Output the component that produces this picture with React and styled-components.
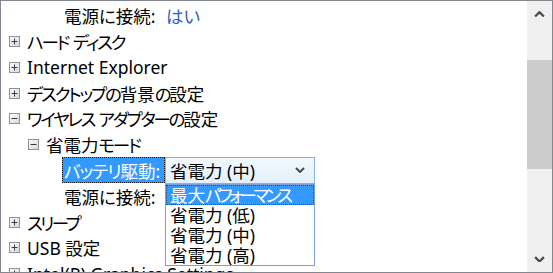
import React from 'react';
import styled, { createGlobalStyle } from 'styled-components';

const GlobalStyle = createGlobalStyle`
    html, body {
        margin: 0;
        padding: 0;
        background: #ffffff;
    }
    body {
        font-family: "Noto Sans", "Noto Sans CJK JP", sans-serif;
        font-feature-settings: "palt";
    }
`;

const Frame = styled.div`
    box-sizing: border-box;
    width: 553px;
    height: 273px;
    border: 1px solid #828790;
    display: flex;
    overflow: hidden;
    background: #ffffff;
`;

const Tree = styled.div`
    flex: 1;
    padding-top: 2px;
    overflow: hidden;
    position: relative;
`;

const Row = styled.div`
    height: 25.78px;
    display: flex;
    align-items: center;
    padding-left: ${p => p.$indent}px;
    font-size: 17.5px;
    color: #000000;
    white-space: nowrap;
`;

const Text = styled.span`
    white-space: pre;
`;

// kana in the original UI font are much narrower than the kanji
const Kana = styled.span`
    letter-spacing: -${p => p.$squeeze || 2.2}px;
`;

const Toggle = styled.svg`
    width: 11px;
    height: 11px;
    flex-shrink: 0;
    margin-right: 7px;
`;

const Label = styled.span`
    box-sizing: border-box;
    width: 103px;
    height: 26px;
    display: flex;
    align-items: center;
    padding: 0 2px;
    flex-shrink: 0;
    background: ${p => (p.$selected ? '#3399ff' : 'transparent')};
    color: ${p => (p.$selected ? '#ffffff' : '#000000')};
    outline: ${p => (p.$selected ? '1px dotted #1a1a1a' : 'none')};
    outline-offset: -1px;
`;

const Value = styled.span`
    color: #2a62c0;
    padding-left: 1px;
`;

const Combo = styled.div`
    position: relative;
    box-sizing: border-box;
    width: 150px;
    height: 27px;
    border: 1px solid #7eb4ea;
    background: linear-gradient(#f1f8fe, #e2f0fc);
    display: flex;
    align-items: center;
    justify-content: space-between;
    padding: 0 9px 0 4px;
`;

const ListBox = styled.div`
    position: absolute;
    left: -1px;
    top: 26px;
    width: 150px;
    box-sizing: border-box;
    border: 1px solid #7d9fd6;
    background: #ffffff;
    z-index: 2;
`;

const Option = styled.div`
    box-sizing: border-box;
    height: 20px;
    display: flex;
    align-items: center;
    padding-left: 4px;
    font-size: 17.5px;
    background: ${p => (p.$active ? '#3399ff' : '#ffffff')};
    color: ${p => (p.$active ? '#ffffff' : '#000000')};
    outline: ${p => (p.$active ? '1px dotted #2a4f7e' : 'none')};
    outline-offset: -1px;
`;

const Scrollbar = styled.div`
    width: 25px;
    background: #f0f0f0;
    display: flex;
    flex-direction: column;
    flex-shrink: 0;
`;

const ArrowButton = styled.div`
    height: 26px;
    display: flex;
    align-items: center;
    justify-content: center;
`;

const Track = styled.div`
    flex: 1;
    padding-top: 33px;
`;

const Thumb = styled.div`
    height: 109px;
    background: #cdcdcd;
`;

const Box = ({ open }) => (
    <Toggle viewBox="0 0 11 11">
        <defs>
            <linearGradient id="boxfill" x1="0" y1="0" x2="1" y2="1">
                <stop offset="0" stopColor="#ffffff" />
                <stop offset="1" stopColor="#d6d6d6" />
            </linearGradient>
        </defs>
        <rect x="0.5" y="0.5" width="10" height="10" fill="url(#boxfill)" stroke="#919191" />
        <line x1="2.5" y1="5.5" x2="8.5" y2="5.5" stroke="#3b3b4a" strokeWidth="1" />
        {!open && <line x1="5.5" y1="2.5" x2="5.5" y2="8.5" stroke="#3b3b4a" strokeWidth="1" />}
    </Toggle>
);

const Chevron = ({ up, size = 10 }) => (
    <svg width={size} height={size * 0.6} viewBox="0 0 10 6">
        <polyline
            points={up ? '1,5 5,1 9,5' : '1,1 5,5 9,1'}
            fill="none"
            stroke="#4a4a4a"
            strokeWidth="2"
        />
    </svg>
);

const options = [
    <span>最大<Kana $squeeze={3.4}>パフォーマンス</Kana></span>,
    '省電力 (低)',
    '省電力 (中)',
    '省電力 (高)',
];

const App = () => {
    return (
        <>
            <GlobalStyle />
            <Frame>
                <Tree>
                    <Row $indent={61}>
                        <Label>電源に接続:</Label>
                        <Value>はい</Value>
                    </Row>
                    <Row $indent={8}>
                        <Box /><Text><Kana>ハード</Kana> <Kana>ディスク</Kana></Text>
                    </Row>
                    <Row $indent={8}>
                        <Box /><Text>Internet Explorer</Text>
                    </Row>
                    <Row $indent={8}>
                        <Box /><Text><Kana>デスクトップの</Kana>背景<Kana>の</Kana>設定</Text>
                    </Row>
                    <Row $indent={8}>
                        <Box open /><Text><Kana>ワイヤレス</Kana> <Kana>アダプターの</Kana>設定</Text>
                    </Row>
                    <Row $indent={27}>
                        <Box open /><Text>省電力<Kana>モード</Kana></Text>
                    </Row>
                    <Row $indent={61}>
                        <Label $selected><Text><Kana $squeeze={1}>バッテリ</Kana>駆動:</Text></Label>
                        <Combo>
                            <span>省電力 (中)</span>
                            <Chevron />
                            <ListBox>
                                {options.map((o, i) => (
                                    <Option key={i} $active={i === 0}>{o}</Option>
                                ))}
                            </ListBox>
                        </Combo>
                    </Row>
                    <Row $indent={61}>
                        <Label>電源に接続:</Label>
                    </Row>
                    <Row $indent={8}>
                        <Box /><Text><Kana $squeeze={2.6}>スリープ</Kana></Text>
                    </Row>
                    <Row $indent={8}>
                        <Box /><Text>USB 設定</Text>
                    </Row>
                    <Row $indent={8}>
                        <Box /><Text>Intel(R) Graphics Settings</Text>
                    </Row>
                </Tree>
                <Scrollbar>
                    <ArrowButton><Chevron up size={11} /></ArrowButton>
                    <Track><Thumb /></Track>
                    <ArrowButton><Chevron size={11} /></ArrowButton>
                </Scrollbar>
            </Frame>
        </>
    );
};

export default App;
